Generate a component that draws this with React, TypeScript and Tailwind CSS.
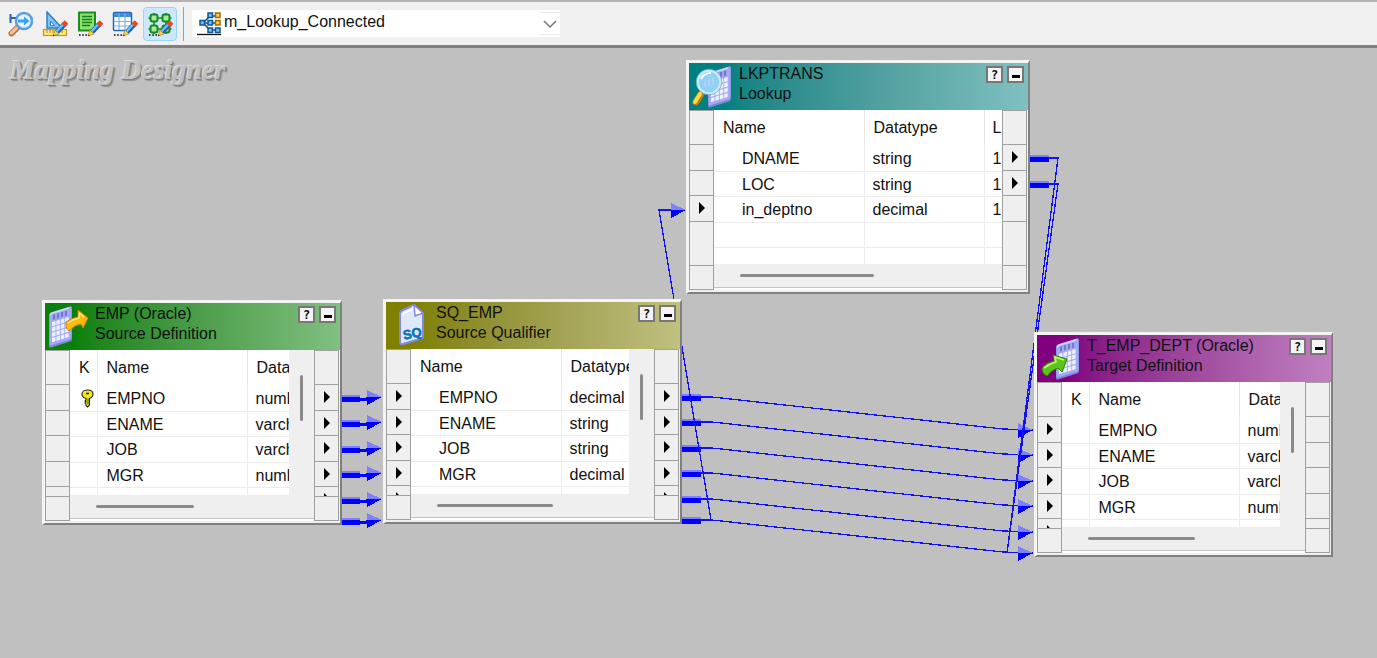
import { useState, type ReactNode } from "react";

type Port = { size: "head" | "tall" | "short" | "sliver" | "filler" | "foot"; mark?: boolean };

const portHeights = {
  head: "h-[35px]",
  tall: "h-[26px]",
  short: "h-[25px]",
  sliver: "h-[10px]",
  filler: "h-[44px]",
  foot: "h-[24px]",
};

function PortColumn({ ports }: { ports: Port[] }) {
  return (
    <div className="w-[25px] shrink-0 border-x border-[#a0a0a0] bg-[#efefef]">
      {ports.map((port, i) => (
        <div
          key={i}
          className={`${portHeights[port.size]} flex justify-center overflow-hidden border-b border-[#a0a0a0] ${
            port.size === "head" ? "border-t" : ""
          }`}
        >
          {port.mark && (
            <svg width="6" height="12" viewBox="0 0 6 12" className="mt-1.5 shrink-0">
              <path d="M0 0L6 6L0 12Z" fill="#000" />
            </svg>
          )}
        </div>
      ))}
    </div>
  );
}

function GridGlyph({ x, y }: { x: number; y: number }) {
  return (
    <g transform={`translate(${x} ${y}) skewY(-17)`}>
      <rect x="0" y="0" width="23" height="35" rx="2" fill="#7f86dc" />
      <rect x="0.5" y="0" width="22" height="33" rx="2" fill="#a3aaf4" />
      <path d="M1.500 3Q1.500 1 3.500 1H20" fill="none" stroke="#d5d9ff" strokeWidth="1.5" />
      <path d="M5 3v5M9 3v5M13 3v5M17 3v5" stroke="#6f78cf" strokeWidth="2.2" />
      {[10, 15.3, 20.6, 25.9].map((row) =>
        [3, 7.4, 11.8, 16.2].map((col) => (
          <rect key={`${row}-${col}`} x={col} y={row} width="3.500" height="4.200" fill="#eef0ff" />
        ))
      )}
    </g>
  );
}

function SourceIcon() {
  return (
    <svg width="50" height="47" viewBox="0 0 50 47" className="shrink-0" aria-hidden="true">
      <GridGlyph x={4} y={10} />
      <path d="M21 19Q26 15 33 14L33 7L43 15L38 25L36 21Q29 22 24 28Q20 25 21 19Z" fill="#ffba10" stroke="#c98200" strokeWidth="1" strokeLinejoin="round" />
      <path d="M23 20Q28 16 34 15L34.500 10L39 14" fill="none" stroke="#ffe680" strokeWidth="1.5" />
    </svg>
  );
}

function TargetIcon() {
  return (
    <svg width="50" height="47" viewBox="0 0 50 47" className="shrink-0" aria-hidden="true">
      <GridGlyph x={19} y={10} />
      <path d="M5 33Q10 27 17 26L16 20L30 24L25 37L21 33Q14 35 10 41Q5 39 5 33Z" fill="#5cc51b" stroke="#278405" strokeWidth="1" strokeLinejoin="round" />
      <path d="M7 33Q12 29 19 27L18 22L27 25" fill="none" stroke="#c0f56b" strokeWidth="1.8" />
    </svg>
  );
}

function LookupIcon() {
  return (
    <svg width="50" height="47" viewBox="0 0 50 47" className="shrink-0" aria-hidden="true">
      <GridGlyph x={19} y={10} />
      <path d="M12 31L7 39" stroke="#b98208" strokeWidth="7" strokeLinecap="round" />
      <path d="M11 31L6 39" stroke="#ffd64a" strokeWidth="4" strokeLinecap="round" />
      <circle cx="20" cy="19" r="11.5" fill="#8fd2f4" stroke="#cdeafa" strokeWidth="2.5" />
      <circle cx="20" cy="19" r="12.8" fill="none" stroke="#5f9fc8" strokeWidth="0.7" />
      <path d="M15 18v6h2v-7zM19 16v7h2v-8zM23 15v7h2v-8z" fill="#b9cdfa" />
      <path d="M12 16Q15 10 22 10" fill="none" stroke="#fff" strokeWidth="2" />
    </svg>
  );
}

function QualifierIcon() {
  return (
    <svg width="50" height="47" viewBox="0 0 50 47" className="shrink-0" aria-hidden="true">
      <path d="M14 12Q14 9 17 8L28 3L37 11L37 36L17 42Q14 43 14 40Z" fill="#dfe8ff" stroke="#8188e8" strokeWidth="2" strokeLinejoin="round" />
      <path d="M16.500 12L27 7V4" fill="none" stroke="#fff" strokeWidth="1.500" />
      <path d="M28 3L29 14L37 11Z" fill="#fff" stroke="#8188e8" strokeWidth="1.500" />
      <text x="17" y="36" transform="rotate(-12 26 32)" fontFamily="Liberation Sans, sans-serif" fontWeight="700" fontSize="13" fill="#0873b8" stroke="#0873b8" strokeWidth="0.6">
        SQ
      </text>
    </svg>
  );
}

function KeyIcon() {
  return (
    <svg width="13" height="19" viewBox="0 0 13 19" className="mx-auto block" aria-label="Primary key" role="img">
      <path d="M6.500 1C9 1 12 2 12 5C12 8 10 9 8.500 9.500V16L6.500 18L5 16.500V15L4 14L5 13L4 12L5 11V9.500C3 9 1 8 1 5C1 2 4 1 6.500 1Z" fill="#f4e81c" stroke="#222" strokeWidth="1.1" />
      <path d="M5 4.500h3" stroke="#222" strokeWidth="1.5" />
      <path d="M7 9.500V15" stroke="#222" strokeWidth="0.8" />
    </svg>
  );
}

type NodeProps = {
  name: string;
  kind: string;
  place: string;
  header: string;
  icon: ReactNode;
  left: Port[];
  right: Port[];
  columns: { label: string; width: string; pad: string; cellPad: string }[];
  rows: ReactNode[][];
  bodyHeight: string;
  thumb: string;
  verticalScroll?: boolean;
};

function MappingNode(p: NodeProps) {
  return (
    <section
      aria-label={p.name}
      className={`absolute ${p.place} border-t-[3px] border-r-2 border-b-2 border-l-[3px] border-t-[#f4f4f4] border-r-[#808080] border-b-[#808080] border-l-[#f4f4f4] bg-[#efefef]`}
    >
      <header className={`flex h-[47px] items-start bg-linear-to-r from-10% ${p.header}`}>
        {p.icon}
        <div className="min-w-0 flex-1 pt-px leading-5 whitespace-nowrap">
          <h2>{p.name}</h2>
          <p>{p.kind}</p>
        </div>
        <div className="flex gap-1 pt-[3px] pr-1">
          <button aria-label={`Help for ${p.name}`} className="flex size-[17px] items-center justify-center border-2 border-[#777] bg-[#f4f4f4] font-['DejaVu_Sans_Mono',monospace] text-[12px] leading-none font-bold">
            ?
          </button>
          <button aria-label={`Minimize ${p.name}`} className="flex size-[17px] items-end justify-center border-2 border-[#777] bg-[#f4f4f4] pb-[3px]">
            <span className="h-[3px] w-2 bg-black" />
          </button>
        </div>
      </header>
      <div className="flex pr-px pb-0.5">
        <PortColumn ports={p.left} />
        <div className="flex min-w-0 flex-1 flex-col">
          <div className={`flex ${p.bodyHeight}`}>
            <div className="min-w-0 flex-1 overflow-hidden bg-white">
              <table className="w-full table-fixed border-collapse text-left whitespace-nowrap">
                <thead>
                  <tr className="h-[35px]">
                    {p.columns.map((c, i) => (
                      <th key={i} className={`${c.width} ${c.pad} overflow-hidden border-r border-[#e4e4e4] py-0 font-normal last:border-r-0`}>
                        {c.label}
                      </th>
                    ))}
                  </tr>
                </thead>
                <tbody>
                  {p.rows.map((row, r) => (
                    <tr key={r} className="h-[25px] border-b border-[#ececec] odd:h-[26px]">
                      {row.map((cell, i) => (
                        <td key={i} className={`${p.columns[i].cellPad} overflow-hidden border-r border-[#ececec] pt-0.5 pb-0 leading-5 last:border-r-0`}>
                          {cell}
                        </td>
                      ))}
                    </tr>
                  ))}
                </tbody>
              </table>
            </div>
            {p.verticalScroll && (
              <div className="flex w-[25px] justify-center pt-[25px]">
                <div className="h-[46px] w-[3px] rounded-full bg-[#8a8a8a]" />
              </div>
            )}
          </div>
          <div className="flex flex-1 flex-col justify-between border-b-2 border-white">
            <div className={`${p.thumb} mt-[10px] h-[3px] rounded-full bg-[#8a8a8a]`} />
            <div className="h-px bg-[#c4c4c4]" />
          </div>
        </div>
        <PortColumn ports={p.right} />
      </div>
    </section>
  );
}

function fieldPorts(mark: boolean): Port[] {
  return [
    { size: "head" },
    { size: "tall", mark },
    { size: "short", mark },
    { size: "tall", mark },
    { size: "short", mark },
    { size: "sliver", mark },
    { size: "foot" },
  ];
}

const lookupPorts = (marks: boolean[]): Port[] => [
  { size: "head" },
  { size: "tall", mark: marks[0] },
  { size: "short", mark: marks[1] },
  { size: "tall", mark: marks[2] },
  { size: "filler" },
  { size: "foot" },
];

const keyed = [
  { label: "K", width: "w-[27px]", pad: "pl-[9px]", cellPad: "pl-[9px]" },
  { label: "Name", width: "w-[150px]", pad: "pl-[9px]", cellPad: "pl-[9px]" },
  { label: "Data", width: "w-auto", pad: "pl-[9px]", cellPad: "pl-2" },
];

function Arrow({ x, y }: { x: number; y: number }) {
  return (
    <g>
      <path d={`M${x - 15} ${y - 7}L${x} ${y}H${x - 15}Z`} fill="#8080ff" />
      <path d={`M${x - 15} ${y}H${x}L${x - 15} ${y + 8}Z`} fill="#0000ff" />
    </g>
  );
}

function Stub({ x, y }: { x: number; y: number }) {
  return (
    <g>
      <rect x={x} y={y - 3} width="19" height="2" fill="#8080ff" />
      <rect x={x} y={y - 1} width="19" height="5" fill="#0000ff" />
    </g>
  );
}

const sourceYs = [398, 423, 449, 474, 500, 521];
const qualifierYs = [397, 422, 448, 473, 499, 520];
const targetYs = [430, 455, 481, 506, 532, 553];

function Links() {
  return (
    <svg
      className="pointer-events-none absolute top-0 left-0 h-full w-full"
      shapeRendering="crispEdges"
      fill="none"
      stroke="none"
      strokeWidth="1.300"
      aria-hidden="true"
    >
      <g transform="translate(0 -48)">
        {sourceYs.map((y, i) => (
          <g key={y}>
            <Stub x={341} y={y} />
            <path d={`M359 ${y + 1}H${367}V${qualifierYs[i] + 1}H372`} stroke="#0000ff" strokeWidth="3" />
            <Arrow x={382} y={qualifierYs[i]} />
          </g>
        ))}
        {qualifierYs.map((y, i) => (
          <g key={y}>
            <Stub x={682} y={y} />
            <path d={`M700 ${y}H712L1003 ${targetYs[i] - 1}L1033 ${targetYs[i]}`} stroke="#1010ff" />
            <Arrow x={1033} y={targetYs[i]} />
          </g>
        ))}
        <path d="M711 520L659 210H672" stroke="#1010ff" />
        <Arrow x={686} y={210} />
        <Stub x={1030} y={158} />
        <Stub x={1030} y={184} />
        <path d="M1048 158H1058L1007 553" stroke="#1010ff" />
        <path d="M1048 184H1058L1007 553" stroke="#1010ff" />
      </g>
    </svg>
  );
}

function Pencil() {
  return (
    <g>
      <path d="M22.500 13L15 21" stroke="#1f63b4" strokeWidth="5" />
      <path d="M21.500 13L14.500 20.500" stroke="#6cc0f5" strokeWidth="2.500" />
      <path d="M24.500 11L21.500 14.500" stroke="#e8481c" strokeWidth="5" />
      <path d="M13 19L17 23L11 25Z" fill="#f8d04a" stroke="#a87508" strokeWidth="0.6" />
      <path d="M11.500 23.500L13 24.500L11 25Z" fill="#222" />
    </g>
  );
}

function Dots() {
  return <path d="M2 24h1.600M5.200 24h1.600M8.400 24h1.600" stroke="#111" strokeWidth="1.600" />;
}

const tools: { label: string; art: ReactNode }[] = [
  {
    label: "Source Analyzer",
    art: (
      <>
        <path d="M3.500 3v9M3.500 7h6" stroke="#2462b8" strokeWidth="2" />
        <path d="M10 17L4.500 22.500" stroke="#a8704c" strokeWidth="6" strokeLinecap="round" />
        <path d="M9.500 17L4.500 22" stroke="#f6c08a" strokeWidth="3.500" strokeLinecap="round" />
        <circle cx="17" cy="10" r="8" fill="#e2f3ff" stroke="#5b9fe0" strokeWidth="2.500" />
        <path d="M11 8.500H17V5.500L22.500 10L17 14.500V11.500H11Z" fill="#3da2ee" />
      </>
    ),
  },
  {
    label: "Target Designer",
    art: (
      <>
        <path d="M5 1L20 17H5Z" fill="#7cc4f6" stroke="#2d7cc8" strokeWidth="1.500" />
        <path d="M8.500 10L12.500 14.500H8.500Z" fill="#f0f0f0" stroke="#2d7cc8" />
        <rect x="1.500" y="18.500" width="23" height="6" fill="#ffe97a" stroke="#c9961c" strokeWidth="1.200" />
        <path d="M5 19v3M8 19v3M11 19v3M14 19v3M20 19v3" stroke="#b58416" />
        <Pencil />
      </>
    ),
  },
  {
    label: "Transformation Developer",
    art: (
      <>
        <rect x="2" y="1.500" width="16" height="18" fill="#8fe070" stroke="#1b8f22" strokeWidth="2" />
        <path d="M5 5.500h10M5 8.500h10M5 11.500h10M5 14.500h8" stroke="#14801c" strokeWidth="1.400" />
        <Dots />
        <Pencil />
      </>
    ),
  },
  {
    label: "Mapplet Designer",
    art: (
      <>
        <rect x="1.500" y="1.500" width="18" height="18" rx="1" fill="#fff" stroke="#2268b8" strokeWidth="1.500" />
        <rect x="2" y="2" width="17" height="4" fill="#3f8ddb" />
        <path d="M7 2v17M13 2v17M2 10.500h17M2 15h17" stroke="#7ab0e2" strokeWidth="1.200" />
        <Dots />
        <Pencil />
      </>
    ),
  },
  {
    label: "Mapping Designer",
    art: (
      <>
        <path d="M1.500 7h23M1.500 18h23M7 2v21M19 2v21" stroke="#158a1c" strokeWidth="1.600" />
        {[
          [7, 7],
          [19, 7],
          [7, 18],
          [19, 18],
        ].map(([x, y]) => (
          <rect key={`${x}-${y}`} x={x - 3.5} y={y - 3.5} width="7" height="7" rx="2" fill="#a6ec96" stroke="#158a1c" strokeWidth="2" />
        ))}
        <Dots />
        <Pencil />
      </>
    ),
  },
];

function MappingGlyph() {
  const boxes: [number, number, string, string][] = [
    [3, 8.5, "#62c6fa", "#10558f"],
    [11, 1, "#62c6fa", "#10558f"],
    [11, 8.5, "#62c6fa", "#10558f"],
    [11, 16, "#62c6fa", "#10558f"],
    [18.5, 1, "#ffd04a", "#9c6a08"],
    [18.5, 8.5, "#ffd04a", "#9c6a08"],
    [18.5, 16, "#62c6fa", "#10558f"],
  ];
  return (
    <svg width="24" height="24" viewBox="0 0 24 24" className="shrink-0" aria-hidden="true">
      <path d="M3 11H20M6 11L13 4H20M6 11L13 18H20" fill="none" stroke="#10558f" strokeWidth="1.500" />
      {boxes.map(([x, y, fill, stroke]) => (
        <rect key={`${x}-${y}`} x={x} y={y} width="4.500" height="4.500" fill={fill} stroke={stroke} strokeWidth="1.500" />
      ))}
      <path d="M0 22.500H24" stroke="#111" strokeWidth="1.300" />
    </svg>
  );
}

export default function App() {
  const [tool, setTool] = useState("Mapping Designer");
  return (
    <div className="flex min-h-screen flex-col bg-[#c0c0c0] font-['Liberation_Sans',Arial,sans-serif] text-base text-[#111]">
      <nav aria-label="Designer tools" className="flex h-12 items-center border-t-2 border-b-[3px] border-t-[#b4b2b2] border-b-[#808080] bg-[#f0f0f0] pl-[3px]">
        <div className="flex gap-px">
          {tools.map((t) => (
            <button
              key={t.label}
              aria-label={t.label}
              aria-pressed={tool === t.label}
              onClick={() => setTool(t.label)}
              className={`flex size-[34px] items-center justify-center rounded border ${
                tool === t.label ? "border-[#99d1ff] bg-[#cce8ff]" : "border-transparent"
              }`}
            >
              <svg width="26" height="26" viewBox="0 0 26 26" fill="none" aria-hidden="true">
                {t.art}
              </svg>
            </button>
          ))}
        </div>
        <div className="mx-[6px] h-[34px] w-px bg-[#a0a0a0]" />
        <div className="ml-0.5 flex h-[27px] w-[368px] items-center bg-white pl-[5px]">
          <MappingGlyph />
          <select aria-label="Mapping" className="h-full min-w-0 flex-1 appearance-none bg-transparent pb-1 pl-[3px] text-base outline-none">
            <option>m_Lookup_Connected</option>
          </select>
          <div className="pointer-events-none flex h-[23px] w-5 items-center justify-center border-y border-[#ececec]">
            <svg width="14" height="8" viewBox="0 0 14 8" aria-hidden="true">
              <path d="M1 1L7 7L13 1" fill="none" stroke="#777" strokeWidth="1.500" />
            </svg>
          </div>
        </div>
      </nav>

      <main className="relative flex-1 overflow-hidden">
        <h1 className="pt-1 pl-[10px] font-['Liberation_Serif',serif] text-[28px] leading-9 font-bold text-[#c0c0c0] italic [text-shadow:-1px_-1px_0_#dcdcdc,1px_1px_0_#808080,2px_2px_1px_#909090]">
          Mapping Designer
        </h1>
        <Links />

        <MappingNode
          name="EMP (Oracle)"
          kind="Source Definition"
          place="left-[42px] top-[252px] w-[300px]"
          header="from-[#0a800a] to-[#80c080]"
          icon={<SourceIcon />}
          left={fieldPorts(false)}
          right={fieldPorts(true)}
          columns={keyed}
          rows={[
            [<KeyIcon />, "EMPNO", "numb"],
            ["", "ENAME", "varch"],
            ["", "JOB", "varch"],
            ["", "MGR", "numb"],
            ["", "", ""],
          ]}
          bodyHeight="h-[145px]"
          thumb="ml-[26px] w-[98px]"
          verticalScroll
        />

        <MappingNode
          name="SQ_EMP"
          kind="Source Qualifier"
          place="left-[383px] top-[251px] w-[299px]"
          header="from-[#808000] to-[#c0c080]"
          icon={<QualifierIcon />}
          left={fieldPorts(true)}
          right={fieldPorts(true)}
          columns={[
            { label: "Name", width: "w-[150px]", pad: "pl-[9px]", cellPad: "pl-[28px]" },
            { label: "Datatype", width: "w-auto", pad: "pl-[9px]", cellPad: "pl-2" },
          ]}
          rows={[
            ["EMPNO", "decimal"],
            ["ENAME", "string"],
            ["JOB", "string"],
            ["MGR", "decimal"],
            ["", ""],
          ]}
          bodyHeight="h-[145px]"
          thumb="ml-[26px] w-[116px]"
          verticalScroll
        />

        <MappingNode
          name="LKPTRANS"
          kind="Lookup"
          place="left-[686px] top-[12px] w-[344px]"
          header="from-[#008080] to-[#80c0c0]"
          icon={<LookupIcon />}
          left={lookupPorts([false, false, true])}
          right={lookupPorts([true, true, false])}
          columns={[
            { label: "Name", width: "w-[150px]", pad: "pl-[9px]", cellPad: "pl-[28px]" },
            { label: "Datatype", width: "w-[120px]", pad: "pl-[9px]", cellPad: "pl-2" },
            { label: "L", width: "w-auto", pad: "pl-2", cellPad: "pl-2" },
          ]}
          rows={[
            ["DNAME", "string", "1"],
            ["LOC", "string", "1"],
            ["in_deptno", "decimal", "1"],
            ["", "", ""],
            ["", "", ""],
          ]}
          bodyHeight="h-[154px]"
          thumb="ml-[26px] w-[134px]"
        />

        <MappingNode
          name="T_EMP_DEPT (Oracle)"
          kind="Target Definition"
          place="left-[1034px] top-[284px] w-[299px]"
          header="from-[#800080] to-[#c080c0]"
          icon={<TargetIcon />}
          left={fieldPorts(true)}
          right={fieldPorts(false)}
          columns={keyed}
          rows={[
            ["", "EMPNO", "numb"],
            ["", "ENAME", "varch"],
            ["", "JOB", "varch"],
            ["", "MGR", "numb"],
            ["", "", ""],
          ]}
          bodyHeight="h-[145px]"
          thumb="ml-[26px] w-[107px]"
          verticalScroll
        />
      </main>
    </div>
  );
}
